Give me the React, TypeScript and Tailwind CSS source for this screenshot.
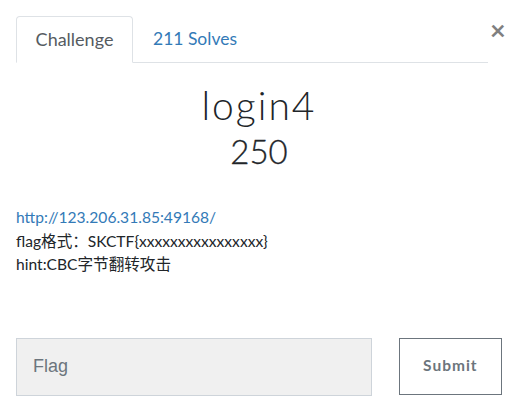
import React from 'react';

export default function App() {
  return (
    <div className="w-[518px] h-[413px] bg-white relative overflow-hidden" style={{ fontFamily: 'Lato, "Noto Sans CJK SC", sans-serif' }}>
      {/* Close button */}
      <button className="absolute left-[490px] top-[16px] text-[27px] leading-none text-[#808080] font-bold">×</button>

      <div className="pt-4 px-4">
        {/* Tabs */}
        <div className="flex w-[472px] border-b border-[#dee2e6]">
          <div className="h-[47px] w-[117px] -mb-px flex items-center justify-center border border-[#dee2e6] border-b-white rounded-t-[4px] text-[18px] text-[#555b61]">
            Challenge
          </div>
          <div className="h-[46px] px-[20px] flex items-center text-[17.5px] text-[#337ab7]">211 Solves</div>
        </div>

        {/* Title */}
        <div className="text-center text-[#212529] mt-[20px]">
          <div className="text-[39px] font-light leading-[44px] tracking-[2px]">login4</div>
          <div className="text-[33px] font-light leading-[40px] mt-[4px] [-webkit-text-stroke:0.3px_#212529]">250</div>
        </div>

        {/* Description */}
        <div className="mt-[35px] text-[15.6px] leading-[23.5px] text-[#212529]">
          <a className="text-[#337ab7] block">http://123.206.31.85:49168/</a>
          <div>flag格式：SKCTF{'{'}xxxxxxxxxxxxxxxx{'}'}</div>
          <div>hint:CBC字节翻转攻击</div>
        </div>

        {/* Submit row */}
        <div className="flex items-start mt-[61px]">
          <div className="w-[358px] h-[58px] bg-[#f0f0f0] border border-[#ced4da] flex items-center pl-[16px] text-[18px] text-[#6c757d]" style={{ fontFamily: '"Liberation Sans", Arial, sans-serif' }}>
            Flag
          </div>
          <button className="ml-[27px] w-[104px] h-[57px] border border-[#6c757d] text-[#6c757d] text-[15.5px] font-bold tracking-[1px] flex items-center justify-center">
            Submit
          </button>
        </div>
      </div>
    </div>
  );
}
